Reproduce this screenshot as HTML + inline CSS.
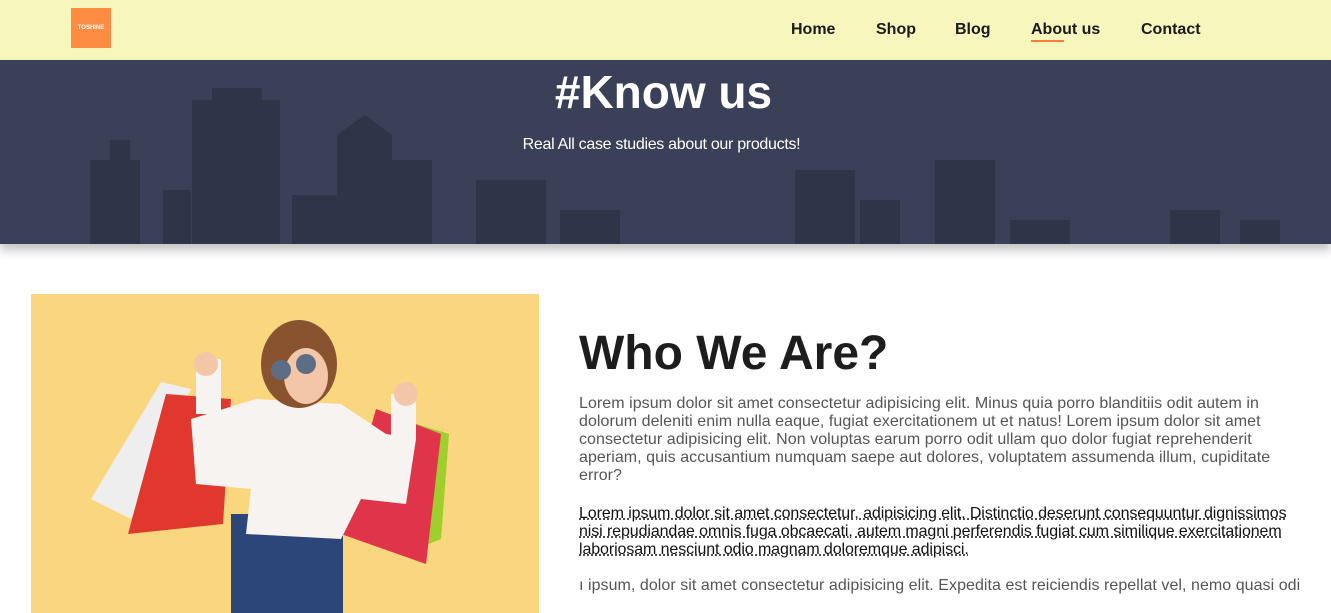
<!DOCTYPE html>
<html><head><meta charset="utf-8"><style>
*{margin:0;padding:0;box-sizing:border-box}
body{width:1331px;height:613px;overflow:hidden;background:#fff;font-family:"Liberation Sans",Arial,sans-serif;position:relative}
.nav{position:absolute;left:0;top:0;width:1331px;height:60px;background:#f7f6bd}
.logo{position:absolute;left:71px;top:8px;width:40px;height:40px;background:#ff8c42;color:#fff;font-size:6px;font-weight:bold;text-align:center;line-height:40px}
.nav a{position:absolute;top:21px;font-size:16px;font-weight:bold;color:#1a1a1a;text-decoration:none}
.hero{position:absolute;left:0;top:60px;width:1331px;height:184px;background:#394057;box-shadow:0 6px 10px rgba(0,0,0,.25);overflow:hidden}
.hero h1{position:absolute;left:0;width:1331px;top:5px;text-align:center;color:#fff;font-size:46px;font-weight:bold;margin-left:-2px}
.hero p{position:absolute;left:0;width:1331px;top:76px;text-align:center;color:#fff;font-size:16px;margin-left:-4px;letter-spacing:-0.3px}
.img{position:absolute;left:31px;top:294px;width:508px;height:319px}
h2{position:absolute;left:579px;top:326px;font-size:48px;font-weight:bold;color:#1d1d1d}
.t{position:absolute;left:579px;width:722px;font-size:16px;line-height:18px;color:#555;letter-spacing:0.05px}
.u{color:#111;text-decoration:underline dotted;letter-spacing:-0.1px;width:735px}
</style></head><body>
<div class="nav">
<div class="logo">TOSHINE</div>
<a style="left:791px">Home</a>
<a style="left:876px">Shop</a>
<a style="left:955px">Blog</a>
<a style="left:1031px">About us</a>
<div style="position:absolute;left:1031px;top:40px;width:33px;height:2px;background:#ff7b3a"></div>
<a style="left:1141px">Contact</a>
</div>
<div class="hero">
<svg width="1331" height="184" style="position:absolute;left:0;top:0">
<g fill="#2f3548">
<rect x="90" y="100" width="50" height="84"/><rect x="110" y="80" width="20" height="30"/>
<rect x="163" y="130" width="28" height="54"/>
<rect x="192" y="40" width="88" height="144"/><rect x="212" y="28" width="50" height="20"/>
<rect x="292" y="135" width="45" height="49"/>
<rect x="337" y="75" width="55" height="109"/><polygon points="337,75 365,55 392,75"/>
<rect x="392" y="100" width="40" height="84"/>
<rect x="476" y="120" width="70" height="64"/>
<rect x="560" y="150" width="60" height="34"/>
<rect x="795" y="110" width="60" height="74"/><rect x="860" y="140" width="40" height="44"/>
<rect x="935" y="100" width="60" height="84"/>
<rect x="1010" y="160" width="60" height="24"/><rect x="1170" y="150" width="50" height="34"/><rect x="1240" y="160" width="40" height="24"/>
</g></svg>
<h1>#Know us</h1>
<p>Real All case studies about our products!</p>
</div>
<svg class="img" viewBox="0 0 508 319">
<rect width="508" height="319" fill="#fad67e"/>
<polygon points="60,205 130,88 160,95 100,225" fill="#eeeeee"/>
<polygon points="135,100 200,105 192,230 97,240" fill="#e0382f"/>
<polygon points="385,130 418,140 410,245 385,255" fill="#9fcf2c"/>
<polygon points="345,115 410,140 395,270 310,240" fill="#e0344a"/>
<rect x="200" y="220" width="112" height="99" fill="#2c4679"/>
<polygon points="160,125 225,105 310,110 355,140 385,145 375,210 330,205 310,245 215,240 220,195 165,190" fill="#f6f3f0"/>
<rect x="165" y="65" width="25" height="55" fill="#f6f3f0"/>
<rect x="360" y="100" width="25" height="45" fill="#f6f3f0"/>
<circle cx="175" cy="70" r="12" fill="#f3c6a8"/>
<circle cx="375" cy="100" r="12" fill="#f3c6a8"/>
<ellipse cx="268" cy="70" rx="38" ry="44" fill="#8a5330"/>
<ellipse cx="275" cy="82" rx="22" ry="28" fill="#f3c6a8"/>
<circle cx="250" cy="76" r="10" fill="#5d6d86"/><circle cx="275" cy="70" r="10" fill="#5d6d86"/>
</svg>
<h2>Who We Are?</h2>
<div class="t" style="top:395px">Lorem ipsum dolor sit amet consectetur adipisicing elit. Minus quia porro blanditiis odit autem in dolorum deleniti enim nulla eaque, fugiat exercitationem ut et natus! Lorem ipsum dolor sit amet consectetur adipisicing elit. Non voluptas earum porro odit ullam quo dolor fugiat reprehenderit aperiam, quis accusantium numquam saepe aut dolores, voluptatem assumenda illum, cupiditate error?</div>
<div class="t u" style="top:505px">Lorem ipsum dolor sit amet consectetur, adipisicing elit. Distinctio deserunt consequuntur dignissimos nisi repudiandae omnis fuga obcaecati, autem magni perferendis fugiat cum similique exercitationem laboriosam nesciunt odio magnam doloremque adipisci.</div>
<div class="t" style="top:577px;white-space:nowrap;overflow:hidden;width:722px">ı ipsum, dolor sit amet consectetur adipisicing elit. Expedita est reiciendis repellat vel, nemo quasi odio</div>
</body></html>
